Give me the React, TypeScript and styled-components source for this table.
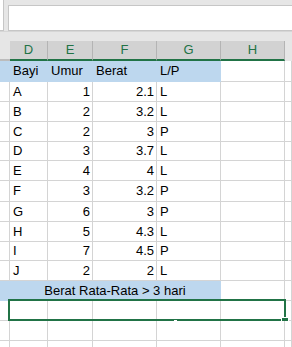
import React from "react";
import styled, { createGlobalStyle } from "styled-components";

const GREEN = "#217346";
const GRID = "#d4d4d4";
const BLUE = "#bdd7ee";
const CHROME = "#e6e6e6";
const COLS = "10px 38px 45px 64px 64px 64px 1fr";

const GlobalStyle = createGlobalStyle`
  html, body { margin: 0; padding: 0; background: #ffffff; }
  body { font-family: "Liberation Sans", Arial, sans-serif; }
`;

const Sheet = styled.div`
  width: 292px;
  height: 347px;
  overflow: hidden;
  background: #ffffff;
`;

const TopBar = styled.div`
  display: flex;
  height: 32px;
  box-sizing: border-box;
  background: ${CHROME};
  border-bottom: 1px solid #d6d6d6;
`;

const NameBox = styled.div`
  width: 4px;
  height: 31px;
  box-sizing: border-box;
  background: #ffffff;
  border-right: 1px solid #c6c6c6;
  border-bottom: 1px solid #c6c6c6;
`;

const FormulaInput = styled.div`
  flex: 1;
  margin: 5px 0 0 4px;
  height: 26px;
  box-sizing: border-box;
  background: #ffffff;
  border: 1px solid #c6c6c6;
  border-right: none;
`;

const Spacer = styled.div`
  height: 9px;
  background: ${CHROME};
`;

const HeaderRow = styled.div`
  display: grid;
  grid-template-columns: ${COLS};
  height: 20px;
  background: ${CHROME};
`;

const HeaderCell = styled.div<{ $kind: "corner" | "col" | "fill" }>`
  box-sizing: border-box;
  height: 20px;
  font-size: 13px;
  line-height: 18px;
  text-align: center;
  color: ${GREEN};
  background: ${(p) => (p.$kind === "col" ? "#d2d2d2" : CHROME)};
  border-right: ${(p) => (p.$kind === "col" ? "1px solid #b4b4b4" : "none")};
  border-bottom: 2px solid
    ${(p) => (p.$kind === "col" ? GREEN : p.$kind === "corner" ? "#bcbcbc" : CHROME)};
`;

const Row = styled.div<{ $h: number }>`
  position: relative;
  display: grid;
  grid-template-columns: ${COLS};
  height: ${(p) => p.$h}px;
`;

const Cell = styled.div<{ $fill?: boolean; $align?: "left" | "right" | "center"; $span?: number; $h: number }>`
  box-sizing: border-box;
  height: ${(p) => p.$h}px;
  grid-column: ${(p) => (p.$span ? `span ${p.$span}` : "auto")};
  padding: ${(p) => (p.$align === "right" ? "0 2px 0 0" : p.$align === "center" ? "0" : "0 0 0 3px")};
  text-align: ${(p) => p.$align ?? "left"};
  font-size: 13px;
  line-height: ${(p) => p.$h - 1}px;
  color: #000000;
  white-space: nowrap;
  overflow: hidden;
  background: ${(p) => (p.$fill ? BLUE : "#ffffff")};
  border-right: 1px solid ${(p) => (p.$fill ? BLUE : GRID)};
  border-bottom: 1px solid ${(p) => (p.$fill ? BLUE : GRID)};
`;

const Selection = styled.div`
  position: absolute;
  left: 8px;
  top: -2px;
  width: 278px;
  height: 22px;
  box-sizing: border-box;
  border: 2px solid ${GREEN};
  pointer-events: none;
`;

const FillHandle = styled.div`
  position: absolute;
  left: 271px;
  top: 16px;
  width: 8px;
  height: 8px;
  box-sizing: border-box;
  background: ${GREEN};
  border: 1px solid #ffffff;
`;

const Notch = styled.div`
  position: absolute;
  left: 164px;
  top: 19px;
  width: 3px;
  height: 1px;
  background: #ffffff;
`;

type Rec = { d: string; e: number; f: string; g: string; h: number };

const data: Rec[] = [
  { d: "A", e: 1, f: "2.1", g: "L", h: 20 },
  { d: "B", e: 2, f: "3.2", g: "L", h: 20 },
  { d: "C", e: 2, f: "3", g: "P", h: 20 },
  { d: "D", e: 3, f: "3.7", g: "L", h: 19 },
  { d: "E", e: 4, f: "4", g: "L", h: 20 },
  { d: "F", e: 3, f: "3.2", g: "P", h: 21 },
  { d: "G", e: 6, f: "3", g: "P", h: 20 },
  { d: "H", e: 5, f: "4.3", g: "L", h: 20 },
  { d: "I", e: 7, f: "4.5", g: "P", h: 19 },
  { d: "J", e: 2, f: "2", g: "L", h: 20 },
];

const letters = ["D", "E", "F", "G", "H"];

function EmptyRow({ h, children }: { h: number; children?: React.ReactNode }) {
  return (
    <Row $h={h}>
      <Cell $h={h} />
      <Cell $h={h} />
      <Cell $h={h} />
      <Cell $h={h} />
      <Cell $h={h} />
      <Cell $h={h} />
      <Cell $h={h} />
      {children}
    </Row>
  );
}

export default function App() {
  return (
    <>
      <GlobalStyle />
      <Sheet>
        <TopBar>
          <NameBox />
          <FormulaInput />
        </TopBar>
        <Spacer />
        <HeaderRow>
          <HeaderCell $kind="corner" />
          {letters.map((l) => (
            <HeaderCell key={l} $kind="col">
              {l}
            </HeaderCell>
          ))}
          <HeaderCell $kind="fill" />
        </HeaderRow>

        <Row $h={21}>
          <Cell $h={21} $fill />
          <Cell $h={21} $fill>Bayi</Cell>
          <Cell $h={21} $fill>Umur</Cell>
          <Cell $h={21} $fill>Berat</Cell>
          <Cell $h={21} $fill>L/P</Cell>
          <Cell $h={21} />
          <Cell $h={21} />
        </Row>

        {data.map((r) => (
          <Row key={r.d} $h={r.h}>
            <Cell $h={r.h} />
            <Cell $h={r.h}>{r.d}</Cell>
            <Cell $h={r.h} $align="right">{r.e}</Cell>
            <Cell $h={r.h} $align="right">{r.f}</Cell>
            <Cell $h={r.h}>{r.g}</Cell>
            <Cell $h={r.h} />
            <Cell $h={r.h} />
          </Row>
        ))}

        <Row $h={20}>
          <Cell $h={20} $fill />
          <Cell $h={20} $fill $span={4} $align="center">
            Berat Rata-Rata &gt; 3 hari
          </Cell>
          <Cell $h={20} />
          <Cell $h={20} />
        </Row>

        <EmptyRow h={20}>
          <Selection>
            <Notch />
            <FillHandle />
          </Selection>
        </EmptyRow>
        <EmptyRow h={20} />
        <EmptyRow h={20} />
      </Sheet>
    </>
  );
}
